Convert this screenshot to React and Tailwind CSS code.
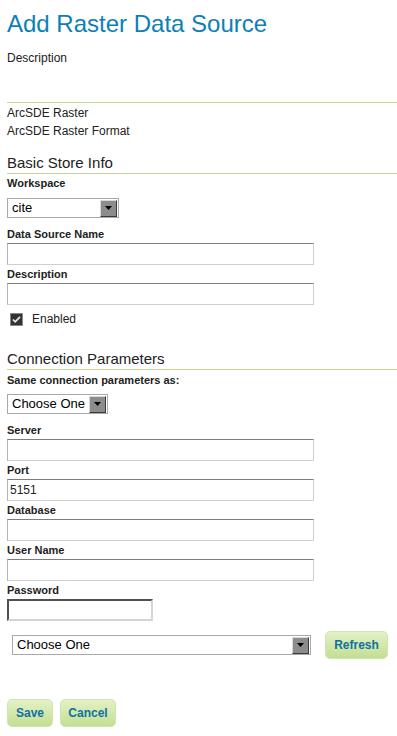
const font = { fontFamily: '"Liberation Sans", Arial, sans-serif' };

function Rule() {
  return <div className="h-px bg-[#c3dd95]" />;
}

function Label({ children, className = '' }) {
  return <div className={`text-[11px] leading-[16px] font-bold text-[#222] ${className}`}>{children}</div>;
}

function TextInput({ value = '', className = 'w-[307px]' }) {
  return (
    <div className={`mt-px h-[22px] ${className} border border-t-[#7d7d7d] border-l-[#b5b5b5] border-r-[#cfcfcf] border-b-[#cfcfcf] bg-white px-[2px] text-[12px] leading-[20px] text-[#222]`}>
      {value}
    </div>
  );
}

function Arrow() {
  return (
    <div className="flex h-[17px] w-[17px] items-center justify-center border border-t-[#d8d8d8] border-l-[#d8d8d8] border-r-[#3a3a3a] border-b-[#3a3a3a] bg-[#8c8c8c]">
      <svg width="7" height="4" viewBox="0 0 7 4">
        <path d="M0 0h7L3.5 4z" fill="#000" />
      </svg>
    </div>
  );
}

function Select({ value, className }) {
  return (
    <div className={`flex h-[20px] items-center justify-between border border-[#a9a9a9] bg-white pl-[4px] pr-px ${className}`}>
      <span className="text-[13px] leading-[18px] text-black">{value}</span>
      <Arrow />
    </div>
  );
}

function Button({ children, className = '' }) {
  return (
    <button className={`h-[28px] rounded-[5px] border border-[#cfe6ad] bg-gradient-to-b from-[#e3f1c6] to-[#c2df93] text-[12px] font-bold text-[#10709f] ${className}`}>
      {children}
    </button>
  );
}

export default function App() {
  return (
    <div className="min-h-[736px] bg-white pl-[7px] pt-[8px] text-[#222]" style={font}>
      <h1 className="h-[32px] text-[24px] leading-[32px] text-[#0c7fb8]">Add Raster Data Source</h1>
      <p className="mt-[9px] text-[12px] leading-[18px]">Description</p>
      <div className="mt-[35px]">
        <Rule />
      </div>
      <p className="mt-px text-[12px] leading-[18px]">ArcSDE Raster</p>
      <p className="text-[12px] leading-[18px]">ArcSDE Raster Format</p>

      <h2 className="mt-[13px] text-[15px] leading-[20px]">Basic Store Info</h2>
      <Rule />
      <Label className="mt-px">Workspace</Label>
      <Select value="cite" className="mt-[7px] w-[112px]" />
      <Label className="mt-[8px]">Data Source Name</Label>
      <TextInput />
      <Label className="mt-px">Description</Label>
      <TextInput />
      <div className="mt-[6px] flex h-[16px] items-center gap-[9px] pl-[3px]">
        <svg width="13" height="13" viewBox="0 0 13 13">
          <rect x="0.5" y="0.5" width="12" height="12" fill="#333" stroke="#888" />
          <path d="M3 6.5l2.2 2.3L10 3.8" fill="none" stroke="#e6e6e6" strokeWidth="1.8" />
        </svg>
        <span className="text-[12px] leading-[16px]">Enabled</span>
      </div>

      <h2 className="mt-[22px] text-[15px] leading-[20px]">Connection Parameters</h2>
      <Rule />
      <Label className="mt-[2px]">Same connection parameters as:</Label>
      <Select value="Choose One" className="mt-[6px] w-[101px]" />
      <Label className="mt-[8px]">Server</Label>
      <TextInput />
      <Label className="mt-px">Port</Label>
      <TextInput value="5151" />
      <Label className="mt-px">Database</Label>
      <TextInput />
      <Label className="mt-px">User Name</Label>
      <TextInput />
      <Label className="mt-px">Password</Label>
      <div className="mt-px h-[22px] w-[146px] border-2 border-t-[#505050] border-l-[#505050] border-r-[#d4d4d4] border-b-[#d4d4d4] bg-white" />

      <div className="mt-[10px] flex items-center pl-[5px]">
        <Select value="Choose One" className="w-[299px]" />
        <Button className="ml-[14px] w-[63px]">Refresh</Button>
      </div>

      <div className="mt-[40px] flex gap-[7px]">
        <Button className="w-[46px]">Save</Button>
        <Button className="w-[56px]">Cancel</Button>
      </div>
    </div>
  );
}
